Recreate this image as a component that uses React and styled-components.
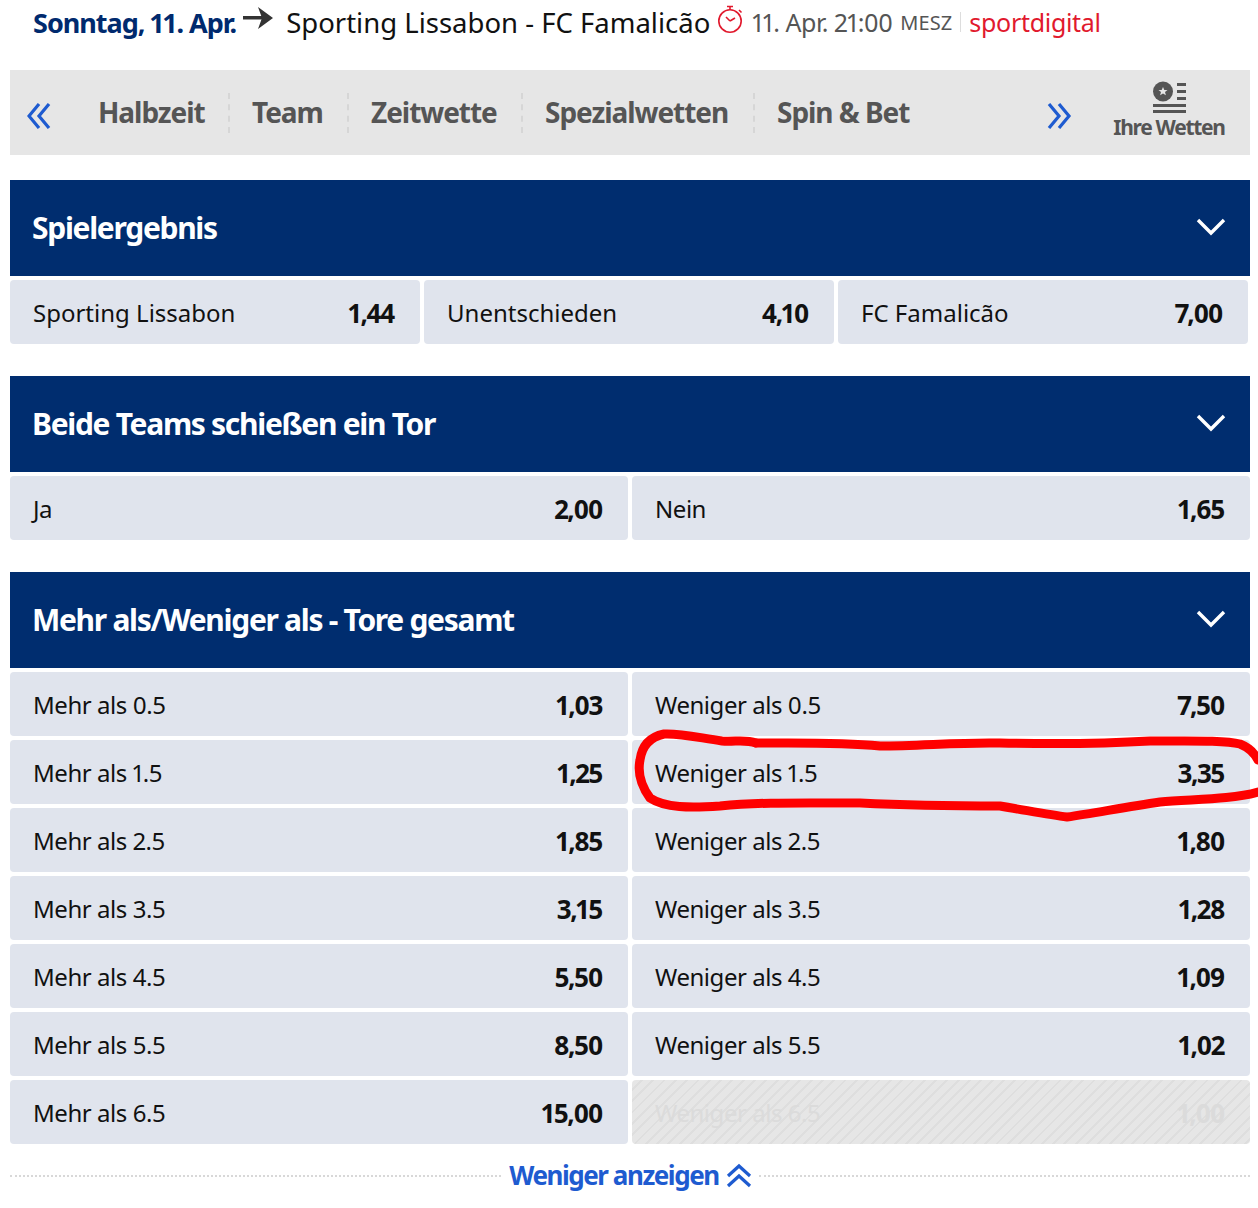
import styled, { createGlobalStyle } from "styled-components";

const GlobalStyle = createGlobalStyle`
	html, body {
		margin: 0;
		background: #fff;
		overflow: hidden;
	}
	body {
		font-family: "Noto Sans", "Open Sans", sans-serif;
		font-variant-numeric: proportional-nums;
	}
`;

const ouMarkets = [
	["Mehr als 0.5", "1,03", "Weniger als 0.5", "7,50"],
	["Mehr als 1.5", "1,25", "Weniger als 1.5", "3,35"],
	["Mehr als 2.5", "1,85", "Weniger als 2.5", "1,80"],
	["Mehr als 3.5", "3,15", "Weniger als 3.5", "1,28"],
	["Mehr als 4.5", "5,50", "Weniger als 4.5", "1,09"],
	["Mehr als 5.5", "8,50", "Weniger als 5.5", "1,02"],
	["Mehr als 6.5", "15,00", "Weniger als 6.5", "1,00"],
];

const Chevrons = ({ dir }) => {
	const d = {
		left: ["M12 1 2 13l10 12", "M22 1 12 13l10 12"],
		right: ["M2 1l10 12L2 25", "M12 1l10 12-10 12"],
		up: ["M2 13 13 3l11 10", "M2 23l11-10 11 10"],
	}[dir];
	return (
		<svg width="26" height="26" viewBox="0 0 26 26" fill="none" stroke="#1e5bd0" strokeWidth="3.2">
			<path d={d[0]} />
			<path d={d[1]} />
		</svg>
	);
};

const App = () => (
	<Page>
		<GlobalStyle />
		<Header>
			<DateText>Sonntag, 11. Apr.</DateText>
			<svg width="30" height="24" viewBox="0 0 30 24" fill="#333" style={{ marginLeft: 7, marginTop: -8 }}>
				<path d="M0 10h19v3.5H0z" />
				<path d="M15 1l15 11-15 11 4-11z" />
			</svg>
			<Match>Sporting Lissabon - FC Famalicão</Match>
			<svg width="26" height="30" viewBox="0 0 26 30" fill="none" stroke="#e1192d" strokeWidth="1.6" style={{ marginLeft: 7, marginTop: -6 }}>
				<circle cx="13" cy="17" r="11.2" />
				<path d="M10 2.5h6M13 2.5v3.5M22 6l2.5 2.5M13 17l-4-4M13 17l5-3" />
			</svg>
			<Time>11. Apr. 21:00</Time>
			<Zone>MESZ</Zone>
			<Divider />
			<Channel>sportdigital</Channel>
		</Header>

		<TabBar>
			<ArrowSlot $left>
				<Chevrons dir="left" />
			</ArrowSlot>
			<Tab $w={132} $first>Halbzeit</Tab>
			<Tab $w={119}>Team</Tab>
			<Tab $w={174}>Zeitwette</Tab>
			<Tab $w={232}>Spezialwetten</Tab>
			<Tab $last>Spin &amp; Bet</Tab>
			<ArrowSlot>
				<Chevrons dir="right" />
			</ArrowSlot>
			<BetSlip>
				<svg width="34" height="34" viewBox="0 0 34 34" fill="#555">
					<circle cx="11" cy="10.5" r="10" />
					<path fill="#e6e6e6" d="M11 6l1.3 3h3.2l-2.5 2.1.9 3.2-2.9-1.8-2.9 1.8.9-3.2-2.5-2.1h3.2z" />
					<path d="M25 2h9v3h-9zM25 9h9v3h-9zM25 16h9v3h-9zM1 23h33v3H1zM1 29h33v3H1z" />
				</svg>
				<BetSlipLabel>Ihre Wetten</BetSlipLabel>
			</BetSlip>
		</TabBar>

		<Market>
			<MarketHeader>
				Spielergebnis
				<ToggleIcon />
			</MarketHeader>
			<Odds $cols={3}>
				<OddCell label="Sporting Lissabon" value="1,44" />
				<OddCell label="Unentschieden" value="4,10" />
				<OddCell label="FC Famalicão" value="7,00" />
			</Odds>
		</Market>

		<Market>
			<MarketHeader>
				Beide Teams schießen ein Tor
				<ToggleIcon />
			</MarketHeader>
			<Odds $cols={2}>
				<OddCell label="Ja" value="2,00" />
				<OddCell label="Nein" value="1,65" />
			</Odds>
		</Market>

		<Market>
			<MarketHeader>
				Mehr als/Weniger als - Tore gesamt
				<ToggleIcon />
			</MarketHeader>
			<Odds $cols={2}>
				{ouMarkets.map(([over, overOdd, under, underOdd]) => (
					<Pair key={over}>
						<OddCell label={over} value={overOdd} />
						<OddCell label={under} value={underOdd} disabled={under === "Weniger als 6.5"} />
					</Pair>
				))}
			</Odds>
		</Market>

		<ShowLess>
			<DottedLine />
			<ShowLessLabel>Weniger anzeigen</ShowLessLabel>
			<ShowLessIcon>
				<Chevrons dir="up" />
			</ShowLessIcon>
			<DottedLine />
		</ShowLess>

		<Scribble width="1258" height="1208" viewBox="0 0 1258 1208" fill="none">
			<path d="M756 743 C745 739 735 742 722 741 C700 738 680 733 664 734 C650 737 642 745 640 760 C637 775 642 787 650 798 C665 808 690 808 720 806 C760 802 800 803 860 803 C900 805 950 806 1000 806 C1030 811 1050 815 1067 817 C1095 813 1125 807 1160 802 C1190 799 1230 800 1258 792" stroke="#fe0000" strokeWidth="9" strokeLinecap="round" />
			<path d="M756 743 C800 743 840 742 880 746 C920 746 960 742 1000 743 C1050 744 1100 744 1150 741 C1190 741 1225 740 1240 744 C1250 748 1255 754 1258 760" stroke="#fe0000" strokeWidth="9" strokeLinecap="round" />
		</Scribble>
	</Page>
);

const OddCell = ({ label, value, disabled }) => (
	<Cell $disabled={disabled}>
		<span>{label}</span>
		<OddValue>{value}</OddValue>
	</Cell>
);

const ToggleIcon = () => (
	<svg width="30" height="20" viewBox="0 0 30 20" fill="none" stroke="#fff" strokeWidth="3.4">
		<path d="M2 3l13 13L28 3" />
	</svg>
);

export default App;

const Page = styled.div`
	position: relative;
	width: 1258px;
	height: 1208px;
	box-sizing: border-box;
	padding: 0 8px 0 10px;
	overflow: hidden;
`;

const Header = styled.div`
	display: flex;
	align-items: center;
	height: 44px;
	padding-left: 23px;
	margin-bottom: 26px;
	white-space: nowrap;
`;

const DateText = styled.span`
	font-size: 27px;
	font-weight: 700;
	color: #002a6e;
	letter-spacing: -1px;
`;

const Match = styled.span`
	margin-left: 13px;
	font-size: 27.5px;
	color: #111;
`;

const Time = styled.span`
	margin-left: 9px;
	font-size: 25px;
	color: #555;
	letter-spacing: -0.5px;
`;

const Zone = styled.span`
	margin-left: 8px;
	font-size: 20px;
	color: #555;
	letter-spacing: 0.1px;
`;

const Divider = styled.span`
	width: 1px;
	height: 20px;
	margin: 0 8px;
	background: #ddd;
`;

const Channel = styled.span`
	font-size: 25px;
	color: #e1192d;
	letter-spacing: -0.3px;
`;

const TabBar = styled.div`
	display: flex;
	align-items: center;
	height: 85px;
	margin-bottom: 25px;
	background: #e6e6e6;
`;

const ArrowSlot = styled.div`
	display: flex;
	flex: none;
	margin-top: 6px;
	margin-left: ${(p) => (p.$left ? "17px" : "0")};
	margin-right: ${(p) => (p.$left ? "45px" : "0")};
`;

const Tab = styled.div`
	box-sizing: border-box;
	flex: ${(p) => (p.$last ? "1" : "none")};
	width: ${(p) => (p.$w ? `${p.$w}px` : "auto")};
	height: 40px;
	line-height: 38px;
	padding-left: ${(p) => (p.$first ? "0" : "22px")};
	border-right: ${(p) => (p.$last ? "none" : "2px dashed #d6d6d6")};
	font-size: 28px;
	font-weight: 700;
	color: #555;
	letter-spacing: -1.05px;
	white-space: nowrap;
`;

const BetSlip = styled.div`
	display: flex;
	flex-direction: column;
	align-items: center;
	flex: none;
	width: 112px;
	margin: -5px 25px 0 40px;
`;

const BetSlipLabel = styled.div`
	margin-top: -1px;
	font-size: 21px;
	line-height: 26px;
	font-weight: 700;
	color: #555;
	letter-spacing: -1.3px;
	white-space: nowrap;
`;

const Market = styled.section`
	margin-bottom: 32px;
`;

const MarketHeader = styled.div`
	display: flex;
	align-items: center;
	justify-content: space-between;
	box-sizing: border-box;
	height: 96px;
	padding: 0 24px 2px 22px;
	background: #002d6f;
	color: #fff;
	font-size: 30px;
	font-weight: 700;
	letter-spacing: -1.3px;
`;

const Odds = styled.div`
	display: grid;
	grid-template-columns: ${(p) => (p.$cols === 3 ? "410px 410px 410px" : "618px 618px")};
	gap: 4px;
	margin-top: 4px;
	letter-spacing: ${(p) => (p.$cols === 3 ? "0" : "-0.45px")};
`;

const Pair = styled.div`
	display: contents;
`;

const Cell = styled.div`
	display: flex;
	align-items: center;
	justify-content: space-between;
	box-sizing: border-box;
	height: 64px;
	padding: 0 26px 0 23px;
	border-radius: 4px;
	font-size: 24px;
	color: ${(p) => (p.$disabled ? "#dbdbdb" : "#111")};
	background: ${(p) =>
		p.$disabled
			? "repeating-linear-gradient(135deg, #e6e6e6 0 6px, #dedede 6px 8px)"
			: "#e0e4ed"};
`;

const OddValue = styled.span`
	margin-top: 1px;
	font-size: 26px;
	font-weight: 700;
	letter-spacing: -1.4px;
`;

const ShowLess = styled.div`
	display: flex;
	align-items: center;
	margin-top: -32px;
	height: 64px;
`;

const DottedLine = styled.div`
	flex: 1;
	border-top: 2px dotted #d8d8d8;
`;

const ShowLessLabel = styled.span`
	margin: 0 7px 3px 8px;
	font-size: 26px;
	font-weight: 700;
	color: #1e5bd0;
	letter-spacing: -1.45px;
`;

const ShowLessIcon = styled.span`
	display: flex;
	margin-right: 7px;
`;

const Scribble = styled.svg`
	position: absolute;
	top: 0;
	left: 0;
	pointer-events: none;
`;
